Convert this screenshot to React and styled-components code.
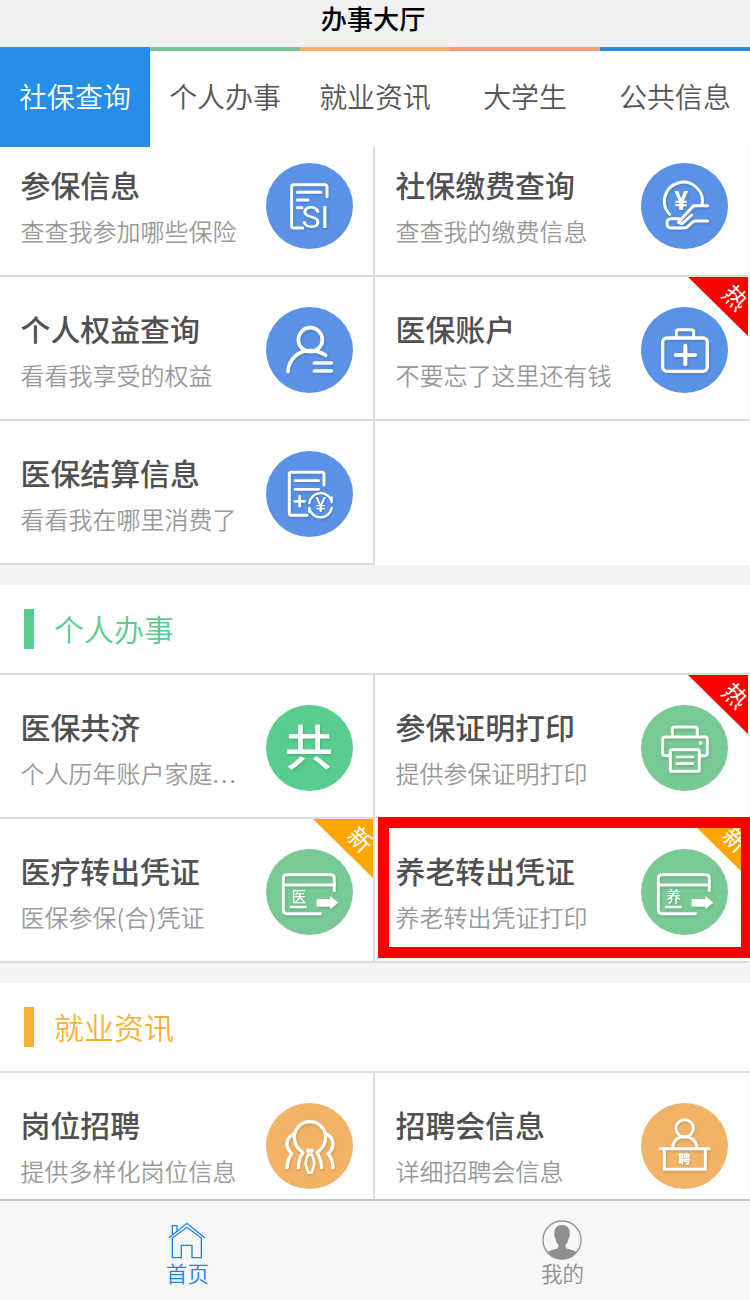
import React from "react";
import styled, { createGlobalStyle } from "styled-components";

const GlobalStyle = createGlobalStyle`
  * {
    box-sizing: border-box;
  }

  body {
    margin: 0;
    background: #fff;
    font-family: "Noto Sans CJK SC", sans-serif;
  }
`;

const Page = styled.div`
  display: flex;
  flex-direction: column;
  width: 750px;
  height: 1300px;
  overflow: hidden;
  background: #fff;
`;

const Header = styled.header`
  flex: none;
  height: 47px;
  padding-right: 4px;
  background: #f1f1f1;
  color: #000;
  font-size: 26.2px;
  font-weight: 500;
  line-height: 37px;
  text-align: center;
`;

const Tabs = styled.nav`
  display: flex;
  flex: none;
  height: 100px;
`;

const Tab = styled.div`
  flex: 1;
  border-top: 4px solid ${({ $color }) => $color};
  background: ${({ $active, $color }) => ($active ? $color : "#fff")};
  color: ${({ $active }) => ($active ? "#fff" : "#555")};
  font-size: 27.9px;
  font-weight: 350;
  line-height: 90px;
  text-align: center;
`;

const Content = styled.main`
  flex: 1;
  min-height: 0;
  overflow: hidden;
  background: #f4f4f4;
`;

const Section = styled.section`
  margin: ${({ $scrolled }) => ($scrolled ? "-14px 0 20px" : "0 0 20px")};
  background: #fff;
`;

const SectionTitle = styled.h2`
  display: flex;
  align-items: center;
  gap: 20px;
  height: 90px;
  margin: 0;
  padding-left: 24px;
  border-bottom: 2px solid #dcdcdc;
  color: ${({ $color }) => $color};
  font-size: 30px;
  font-weight: 350;
  line-height: 40px;

  &::before {
    content: "";
    width: 10px;
    height: 40px;
    background: ${({ $color }) => $color};
  }

  span {
    margin-top: -3px;
  }
`;

const Grid = styled.div`
  display: grid;
  grid-template-columns: 375px 375px;
  grid-auto-rows: 144px;
`;

const Cell = styled.div`
  position: relative;
  display: flex;
  justify-content: space-between;
  padding: 28px 20px 0 20.5px;
  border-right: 2px solid #dcdcdc;
  border-bottom: 2px solid #dcdcdc;

  &:nth-child(2n) {
    border-right-color: #fcfcfc;
  }
`;

const CellText = styled.div`
  width: 225px;
  line-height: 46px;
  white-space: nowrap;
`;

const CellTitle = styled.div`
  color: #505050;
  font-size: 29.9px;
  font-weight: 500;
`;

const CellNote = styled.div`
  margin-top: 1px;
  color: #999;
  font-size: 24px;
  font-weight: 350;
`;

const Ellipsis = styled.span`
  letter-spacing: 2px;
`;

const Badge = styled.svg`
  flex: none;
  width: 87px;
  height: 86px;
  margin-top: 1.5px;
  border-radius: 50%;
  background: ${({ $color }) => $color};
  fill: none;
  stroke: #fff;
  stroke-width: 9;
  stroke-linecap: round;
  stroke-linejoin: round;

  g {
    filter: drop-shadow(2px 4px 3px rgba(0, 0, 0, 0.16));
  }

  text {
    fill: #fff;
    stroke: none;
    text-anchor: middle;
  }

  .solid {
    fill: #fff;
    stroke: none;
  }
`;

const Ribbon = styled.div`
  position: absolute;
  top: 0;
  right: 0;
  width: 60px;
  height: 59px;
  overflow: hidden;
  background: ${({ $color }) => $color};
  clip-path: polygon(0 0, 100% 0, 100% 100%);

  span {
    position: absolute;
    top: 8px;
    left: 36px;
    width: 24px;
    color: #fff;
    font-size: 24px;
    font-weight: 400;
    line-height: 24px;
    transform: rotate(45deg);
  }
`;

const Highlight = styled.div`
  position: absolute;
  top: -2px;
  left: 3px;
  width: 374px;
  height: 141px;
  border: 11px solid #fe0000;
`;

const TabBar = styled.footer`
  display: flex;
  flex: none;
  height: 101px;
  border-top: 2px solid #c6c6c6;
  background: #f7f7f7;
`;

const TabBarItem = styled.div`
  display: flex;
  flex: 1;
  flex-direction: column;
  align-items: center;
  padding-top: 19px;
  color: ${({ $active }) => ($active ? "#1e82ee" : "#8f8f8f")};
  font-size: 21.5px;
  font-weight: 350;
  line-height: 25px;

  svg {
    width: 40px;
    height: 40px;
    margin-right: 1px;
    fill: none;
    stroke: currentColor;
    stroke-width: 4;
  }
`;

const latin = { fontFamily: "Roboto, sans-serif" };

const CardIcon = ({ label }) => (
  <g>
    <path
      d="M205 128V88q0-11-11-11H63q-11 0-11 11v95q0 11 11 11h104M52 108h153"
      strokeLinecap="butt"
    />
    <path d="M75 174h44" strokeWidth="8" />
    <path className="solid" d="M152 150h41v-9l24 20-24 20v-8h-41z" />
    <text x="99" y="159" fontSize="43" fontWeight="500">
      {label}
    </text>
  </g>
);

const icons = {
  document: (
    <g>
      <path d="M183 101V71q0-6-6-6H83q-6 0-6 6v118q0 6 6 6h27" />
      <path d="M94 88h71M94 111h32M94 134h14" />
      <text x="148" y="196" fontSize="96" fontWeight="400" style={latin}>
        SI
      </text>
    </g>
  ),
  payment: (
    <g>
      <path d="M86 154A57 57 0 1 1 183 126" />
      <path d="M200 128h-42l-46 50M152 156l-26 24q-5 4-12-2l8-9q-4-2-8-2H90q-12 0-12 14t12 14h40q6 0 10-4l15-14q4-3 9-3h36" />
      <text x="121" y="142" fontSize="78" fontWeight="700" style={latin}>
        ¥
      </text>
    </g>
  ),
  person: (
    <g strokeWidth="11">
      <circle cx="133" cy="98" r="36" />
      <path d="M66 194C68 156 98 131 130 131q28 0 49 14M145 168h51M145 192h51" />
    </g>
  ),
  medkit: (
    <g>
      <rect x="65" y="93" width="134" height="100" rx="13" strokeWidth="10" />
      <path d="M106 93V75q0-7 7-7h38q7 0 7 7v18" />
      <path d="M133 116v56M104 144h58" strokeWidth="12" />
    </g>
  ),
  bill: (
    <g>
      <path d="M174 102V70q0-6-6-6H76q-6 0-6 6v117q0 6 6 6h47" />
      <path d="M87 89h71M87 115h71M86 151h30M101 136v30" strokeWidth="8" />
      <path
        d="M130 156A34 34 0 0 1 197 153V139M197 171A34 34 0 0 1 130 171V183"
        strokeWidth="7"
      />
      <text x="164" y="184" fontSize="62" fontWeight="400" style={latin}>
        ¥
      </text>
    </g>
  ),
  share: (
    <g>
      <text x="129" y="180" fontSize="144" fontWeight="500">
        共
      </text>
    </g>
  ),
  printer: (
    <g>
      <path d="M94 96V73q0-7 7-7h61q7 0 7 7v23M88 152H72q-7 0-7-7v-42q0-7 7-7h120q7 0 7 7v42q0 7-7 7h-17" />
      <rect x="88" y="134" width="87" height="65" rx="5" />
      <path d="M108 156h48M108 176h48" strokeWidth="8" />
      <circle className="solid" cx="179" cy="114" r="6" />
    </g>
  ),
  medicalCard: <CardIcon label="医" />,
  pensionCard: <CardIcon label="养" />,
  jobs: (
    <g strokeWidth="10">
      <path d="M97 194q1-26 14-45-26-18-26-46a47 47 0 0 1 94 0q0 28-26 46 13 19 14 45" />
      <path d="M82 94q-19 10-19 30 0 14 14 28-13 18-14 42M182 94q19 10 19 30 0 14-14 28 13 18 14 42" />
      <rect className="solid" x="121" y="137" width="22" height="12" rx="3" />
      <path d="M126 155q-7 16-7 29l8 25h10l8-25q0-13-7-29z" strokeWidth="8" />
    </g>
  ),
  desk: (
    <g>
      <circle cx="131" cy="76" r="26" />
      <path d="M95 134q4-33 36-33t37 33M70 137v62h123v-62" />
      <path d="M54 137h154" strokeLinecap="butt" />
      <text x="130" y="184" fontSize="36" fontWeight="900">
        聘
      </text>
    </g>
  ),
};

const BLUE = "#5992e7";
const GREEN = "#79c996";
const ORANGE = "#f2b366";

const tabs = [
  { label: "社保查询", color: "#268de8" },
  { label: "个人办事", color: "#79c598" },
  { label: "就业资讯", color: "#fdb060" },
  { label: "大学生", color: "#ef9b7c" },
  { label: "公共信息", color: "#2989e0" },
];

const hot = { text: "热", color: "#fe0000" };
const fresh = { text: "新", color: "#ffa500" };

const insurance = [
  { title: "参保信息", note: "查查我参加哪些保险", icon: "document", color: BLUE },
  { title: "社保缴费查询", note: "查查我的缴费信息", icon: "payment", color: BLUE },
  { title: "个人权益查询", note: "看看我享受的权益", icon: "person", color: BLUE },
  { title: "医保账户", note: "不要忘了这里还有钱", icon: "medkit", color: BLUE, ribbon: hot },
  { title: "医保结算信息", note: "看看我在哪里消费了", icon: "bill", color: BLUE },
];

const personal = [
  { title: "医保共济", note: "个人历年账户家庭", truncated: true, icon: "share", color: "#59cc8f" },
  { title: "参保证明打印", note: "提供参保证明打印", icon: "printer", color: GREEN, ribbon: hot },
  { title: "医疗转出凭证", note: "医保参保(合)凭证", icon: "medicalCard", color: GREEN, ribbon: fresh },
  {
    title: "养老转出凭证",
    note: "养老转出凭证打印",
    icon: "pensionCard",
    color: GREEN,
    ribbon: fresh,
    highlighted: true,
  },
];

const employment = [
  { title: "岗位招聘", note: "提供多样化岗位信息", icon: "jobs", color: ORANGE },
  { title: "招聘会信息", note: "详细招聘会信息", icon: "desk", color: ORANGE },
];

const Services = ({ items }) => (
  <Grid>
    {items.map(({ title, note, truncated, icon, color, ribbon, highlighted }) => (
      <Cell key={title}>
        <CellText>
          <CellTitle>{title}</CellTitle>
          <CellNote>
            {note}
            {truncated && <Ellipsis>...</Ellipsis>}
          </CellNote>
        </CellText>
        <Badge $color={color} viewBox="0 0 261 258">
          {icons[icon]}
        </Badge>
        {ribbon && (
          <Ribbon $color={ribbon.color}>
            <span>{ribbon.text}</span>
          </Ribbon>
        )}
        {highlighted && <Highlight />}
      </Cell>
    ))}
  </Grid>
);

const App = () => (
  <>
    <GlobalStyle />
    <Page>
      <Header>办事大厅</Header>
      <Tabs>
        {tabs.map(({ label, color }, i) => (
          <Tab key={label} $color={color} $active={i === 0}>
            {label}
          </Tab>
        ))}
      </Tabs>
      <Content>
        <Section $scrolled>
          <Services items={insurance} />
        </Section>
        <Section>
          <SectionTitle $color="#59cc8f">
            <span>个人办事</span>
          </SectionTitle>
          <Services items={personal} />
        </Section>
        <Section>
          <SectionTitle $color="#f8b133">
            <span>就业资讯</span>
          </SectionTitle>
          <Services items={employment} />
        </Section>
      </Content>
      <TabBar>
        <TabBarItem $active>
          <svg viewBox="112 90 120 120">
            <path d="M118 143l54-43 53 43M128 144v59h27v-37h32v37h28v-59l-43-32-44 32M128 134v-27h14v16" />
          </svg>
          首页
        </TabBarItem>
        <TabBarItem>
          <svg viewBox="0 0 120 120">
            <circle cx="60" cy="60" r="57" />
            <path
              fill="currentColor"
              stroke="none"
              d="M17 95q12-6 27-9 7-2 5-11-8-9-9-21-5-5-3-14 0-25 23-25t23 25q2 9-3 14-1 12-9 21-2 9 5 11 15 3 27 9-17 22-43 22T17 95z"
            />
          </svg>
          我的
        </TabBarItem>
      </TabBar>
    </Page>
  </>
);

export default App;
